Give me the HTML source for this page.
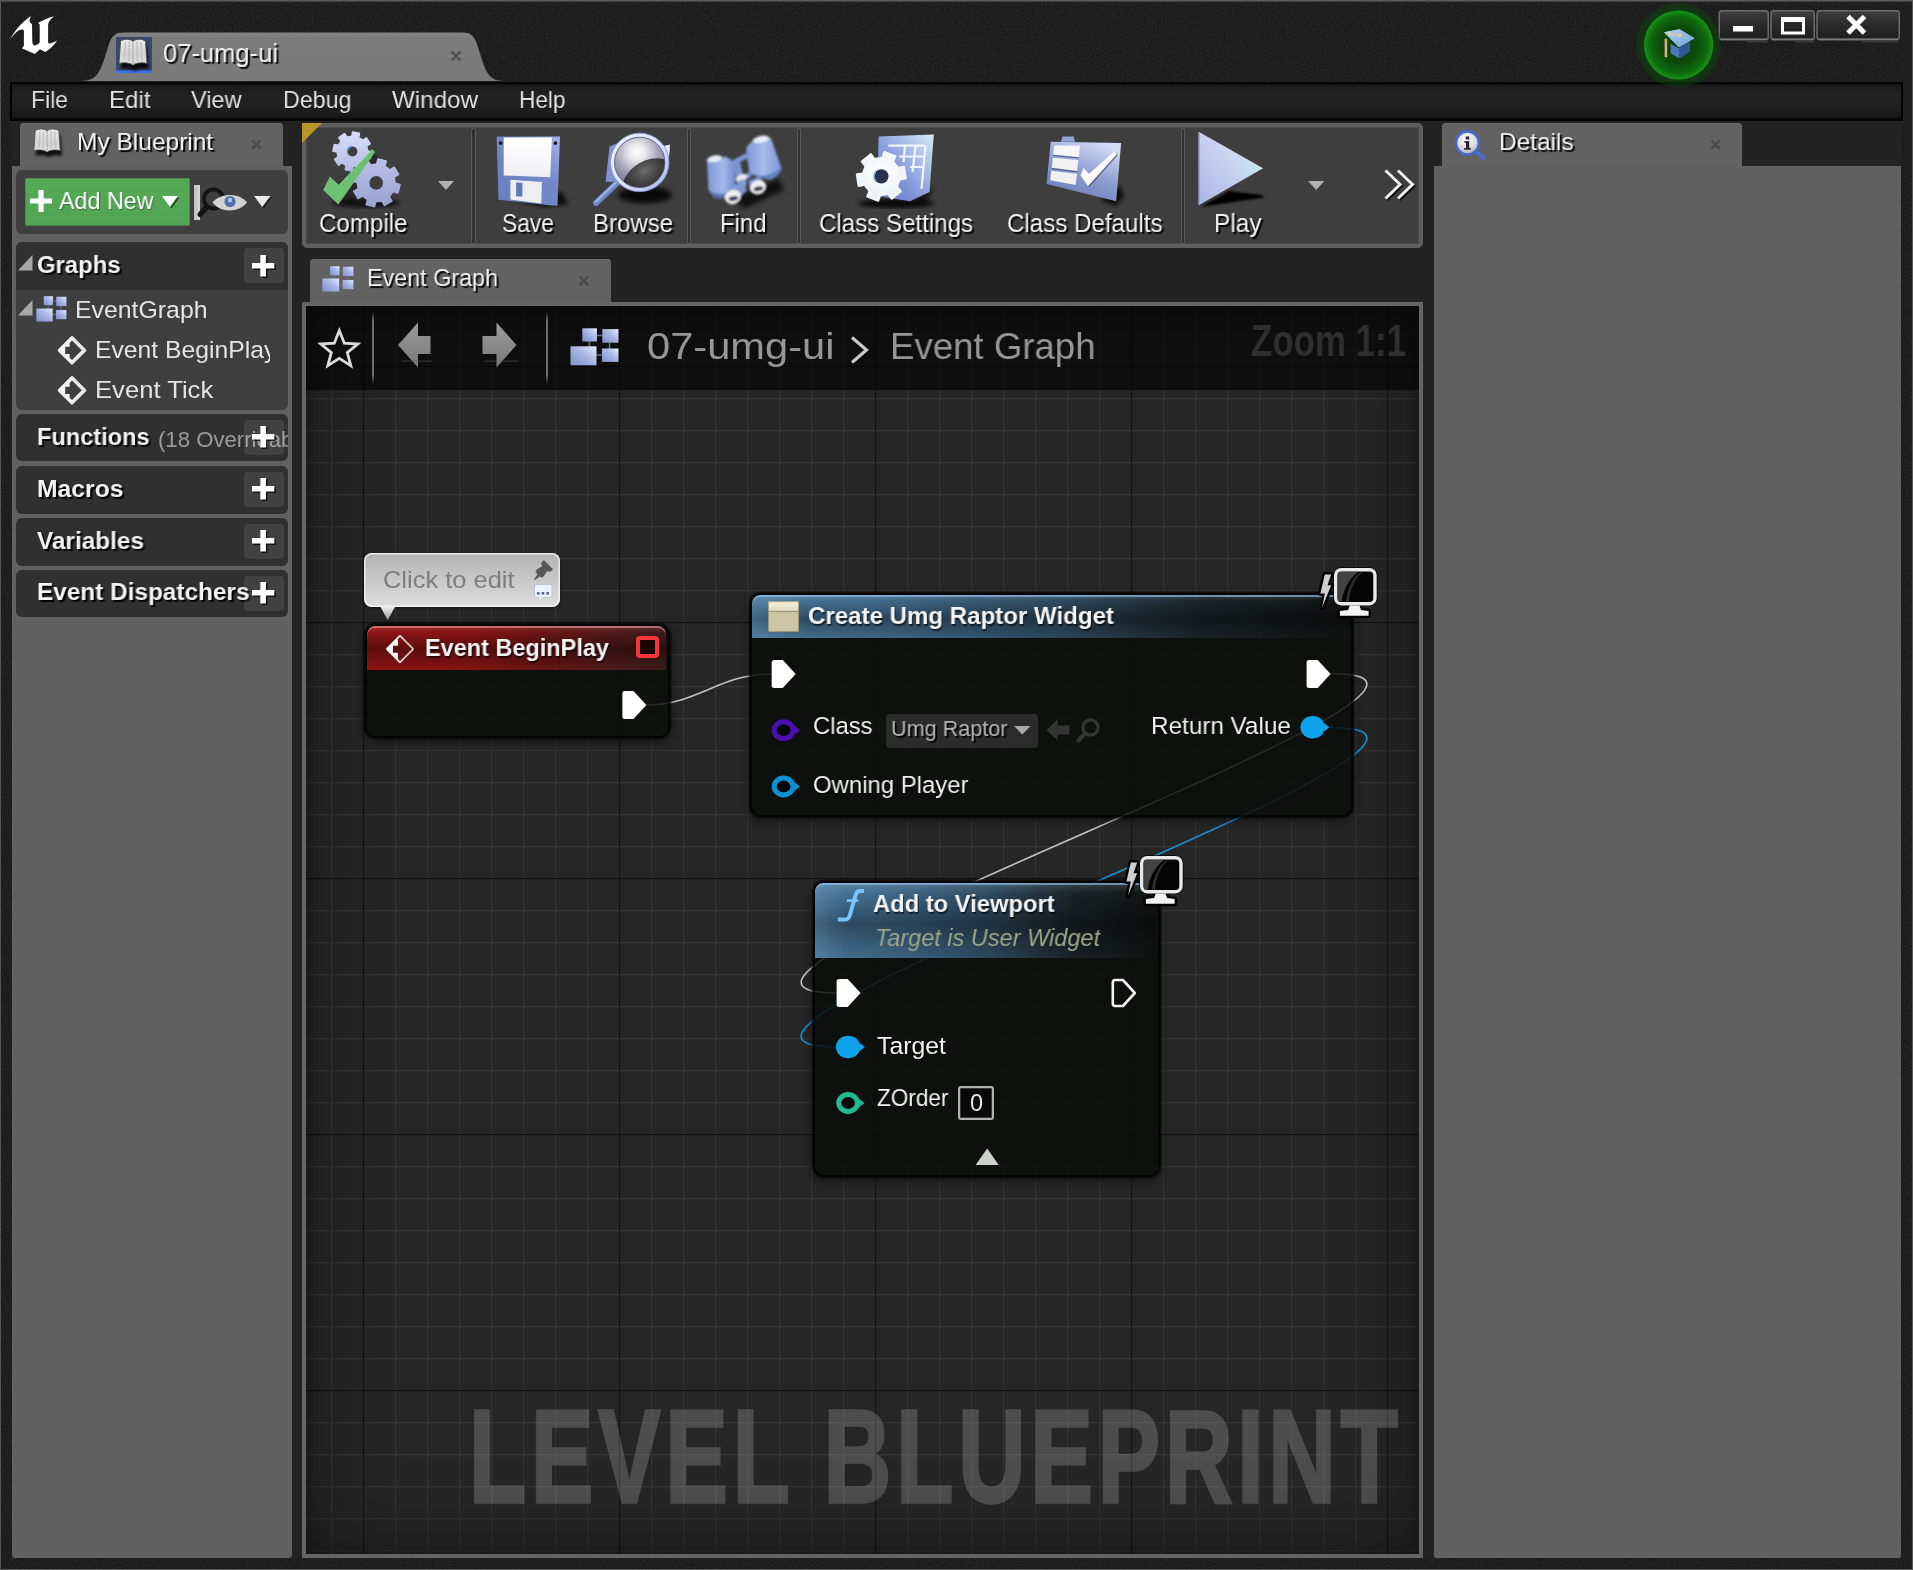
<!DOCTYPE html>
<html><head><meta charset="utf-8"><title>07-umg-ui</title>
<style>
html,body{margin:0;padding:0;}
body{width:1913px;height:1570px;position:relative;overflow:hidden;background:#222222;font-family:"Liberation Sans",sans-serif;}
.t{position:absolute;white-space:nowrap;transform-origin:0 50%;display:block;will-change:transform;}
div,svg,span{box-sizing:border-box;}
</style></head><body>

<svg style="position:absolute;left:0;top:0" width="1913" height="1570">
<defs>
<filter id="nz" x="0" y="0" width="100%" height="100%"><feTurbulence type="fractalNoise" baseFrequency="0.9" numOctaves="2" seed="3" result="n"/><feColorMatrix type="matrix" values="0 0 0 0 1  0 0 0 0 1  0 0 0 0 1  0.09 0.09 0.09 0 -0.095"/></filter>
<radialGradient id="tg" cx="50%" cy="0%" r="70%"><stop offset="0" stop-color="#2a2a2a"/><stop offset="1" stop-color="#1a1a1a"/></radialGradient>
</defs>
<rect width="1913" height="1570" fill="#151515"/>
<rect width="1913" height="1570" filter="url(#nz)"/>
<rect x="11" y="121" width="1891" height="1438" fill="#222222"/>
<rect x="0.5" y="0.5" width="1912" height="1569" fill="none" stroke="#565656" stroke-width="1"/>
<rect x="0" y="0" width="1913" height="1.6" fill="#5a5a5a"/>
</svg>
<svg style="position:absolute;left:5px;top:10px;overflow:visible" width="60" height="50" viewBox="5 10 60 50"><defs><filter id="lb"><feGaussianBlur stdDeviation="0.35"/></filter></defs><path d="M10.2 39.1 C15.5 29.6 22.5 21.6 30.9 16 C30 18 29.3 20.5 29.6 21.6 C30 23 32 23.5 32 24.7 L32.3 41.5 C32.3 44 33.5 45.4 34.8 45.4 C36.5 45.4 38.5 44 39.7 42.6 L39.7 25.1 C39.7 24 38.8 23.3 37.9 23 C43 20.5 48 17.8 54 16.3 C51 19 48.1 22 48.1 24.7 L48.1 41.5 C48.1 43 48.6 43.6 49.1 43.6 C51.5 43.3 54.5 42 57.2 40.5 C54 45.5 49.5 49.5 45.3 52 L40 49.2 L34.8 54.1 L21.8 48.2 C23 47.5 23.9 46.5 23.9 45 L23.9 31 C23.9 30 23 29.6 22 29.6 C18 29.6 14 34.5 10.2 39.1 Z" fill="#fff" filter="url(#lb)"/></svg>
<svg style="position:absolute;left:70px;top:28px" width="450" height="54" viewBox="70 28 450 54">
<defs><linearGradient id="mt" x1="0" y1="0" x2="0" y2="1"><stop offset="0" stop-color="#858585"/><stop offset=".12" stop-color="#7c7c7c"/><stop offset="1" stop-color="#7a7a7a"/></linearGradient></defs>
<path d="M80 81 C98 81 100 70 104 60 L109 44 C112 35 116 32.4 124 32.4 L462 32.4 C470 32.4 474 35 477 44 L482 60 C486 70 488 81 504 81 Z" fill="url(#mt)"/>
</svg>
<svg style="position:absolute;left:116px;top:37px;overflow:visible" width="36" height="36" viewBox="0 0 36 36" preserveAspectRatio="none"><defs><filter id="bks1" x="-30%" y="-30%" width="160%" height="180%"><feGaussianBlur stdDeviation="1.6"/></filter><filter id="bkb1"><feGaussianBlur stdDeviation="0.5"/></filter><linearGradient id="bkg1" x1="0" y1="0" x2="0" y2="1"><stop offset="0" stop-color="#ececec"/><stop offset=".6" stop-color="#d2d2d2"/><stop offset="1" stop-color="#e2e2e2"/></linearGradient></defs><rect x="0" y="0" width="36" height="36" fill="#3a496b"/><rect x="0" y="33.3" width="36" height="2.7" fill="#3a72f2"/><path d="M4.5 4 C8 1.8 12.5 1.8 15.5 3.2 L17 4.4 L18.5 3.2 C21.5 1.8 26 1.8 29.5 4 L31 26.5 C27 25.3 21 25.5 17 28 C13 25.5 7 25.3 3 26.5 Z" fill="#000" opacity=".85" transform="translate(1.8,6)" filter="url(#bks1)"/><g filter="url(#bkb1)"><path d="M4.5 4 C8 1.8 12.5 1.8 15.5 3.2 L17 4.4 L18.5 3.2 C21.5 1.8 26 1.8 29.5 4 L31 26.5 C27 25.3 21 25.5 17 28 C13 25.5 7 25.3 3 26.5 Z" fill="url(#bkg1)" stroke="#4c4c4c" stroke-width="0.9"/><path d="M17 4.4 L17 28" stroke="#b4b4b4" stroke-width="1.3"/><path d="M9.5 5 L8.3 23.5 M13.3 4.6 L12.8 24.3 M21 4.6 L21.4 24.3 M25 5 L26 23.5" stroke="#c4c4c4" stroke-width="1.6"/></g></svg>
<span class="t" style="left:163.0px;top:40.2px;font-size:26.5px;line-height:26.5px;color:#f0f0f0;text-shadow:2px 2px 1px rgba(0,0,0,.95);transform:scaleX(0.9639);">07-umg-ui</span>
<svg style="position:absolute;left:450px;top:49.5px" width="12" height="12" viewBox="0 0 10 10"><path d="M1.2 1.2 L8.8 8.8 M8.8 1.2 L1.2 8.8" stroke="#555" stroke-width="2.1" fill="none"/></svg>
<svg style="position:absolute;left:1715px;top:8px;overflow:visible" width="190" height="38" viewBox="1715 8 190 38"><defs><linearGradient id="wb" x1="0" y1="0" x2="0" y2="1"><stop offset="0" stop-color="#3d3d3d"/><stop offset=".5" stop-color="#2a2a2a"/><stop offset="1" stop-color="#1d1d1d"/></linearGradient></defs><rect x="1719.25" y="10.75" width="49.0" height="29" rx="3" fill="url(#wb)" stroke="#6c6c6c" stroke-width="1.5"/><path d="M1720.5 39 L1767 39" stroke="#8a8a8a" stroke-width="1"/><rect x="1746.275" y="40.5" width="21.715" height="2" fill="#3a3a3a"/><rect x="1771.05" y="10.75" width="43.200000000000045" height="29" rx="3" fill="url(#wb)" stroke="#6c6c6c" stroke-width="1.5"/><path d="M1772.3 39 L1813 39" stroke="#8a8a8a" stroke-width="1"/><rect x="1794.885" y="40.5" width="19.221000000000018" height="2" fill="#3a3a3a"/><rect x="1817.05" y="10.75" width="82.20000000000005" height="29" rx="3" fill="url(#wb)" stroke="#6c6c6c" stroke-width="1.5"/><path d="M1818.3 39 L1898 39" stroke="#8a8a8a" stroke-width="1"/><rect x="1862.335" y="40.5" width="35.99100000000002" height="2" fill="#3a3a3a"/><rect x="1733" y="26" width="20" height="5.5" fill="#fff"/><rect x="1782.5" y="18.5" width="21" height="14.5" fill="none" stroke="#fff" stroke-width="3"/><rect x="1781" y="17" width="24" height="5" fill="#fff"/><path d="M1848 16.5 L1864.5 33 M1864.5 16.5 L1848 33" stroke="#fff" stroke-width="5"/></svg>
<div style="position:absolute;left:10px;top:81.5px;width:1893px;height:39px;background:linear-gradient(#060606 0,#060606 1.5px,#1a1a1a 3.5px,#232323 34%,#1e1e1e 70%,#181818 35px,#070707 37px,#050505 100%);border-left:2px solid #000;border-right:2px solid #000;"></div>
<span class="t" style="left:31.0px;top:87.9px;font-size:24.5px;line-height:24.5px;color:#e2e2e2;text-shadow:0 1px 1px rgba(0,0,0,.6);transform:scaleX(0.9372);">File</span>
<span class="t" style="left:108.5px;top:87.9px;font-size:24.5px;line-height:24.5px;color:#e2e2e2;text-shadow:0 1px 1px rgba(0,0,0,.6);transform:scaleX(0.9830);">Edit</span>
<span class="t" style="left:190.5px;top:87.9px;font-size:24.5px;line-height:24.5px;color:#e2e2e2;text-shadow:0 1px 1px rgba(0,0,0,.6);transform:scaleX(0.9590);">View</span>
<span class="t" style="left:282.5px;top:87.9px;font-size:24.5px;line-height:24.5px;color:#e2e2e2;text-shadow:0 1px 1px rgba(0,0,0,.6);transform:scaleX(0.9488);">Debug</span>
<span class="t" style="left:392.0px;top:87.9px;font-size:24.5px;line-height:24.5px;color:#e2e2e2;text-shadow:0 1px 1px rgba(0,0,0,.6);transform:scaleX(0.9869);">Window</span>
<span class="t" style="left:518.5px;top:87.9px;font-size:24.5px;line-height:24.5px;color:#e2e2e2;text-shadow:0 1px 1px rgba(0,0,0,.6);transform:scaleX(0.9228);">Help</span>
<svg style="position:absolute;left:1630px;top:0px;overflow:visible" width="100" height="92" viewBox="1630 0 100 92"><defs><radialGradient id="tgo"><stop offset="0" stop-color="#0b560b" stop-opacity=".9"/><stop offset=".8" stop-color="#0a480a" stop-opacity=".6"/><stop offset=".96" stop-color="#0a440a" stop-opacity=".48"/><stop offset="1" stop-color="#0a440a" stop-opacity="0"/></radialGradient>
<radialGradient id="tgi" cx="50%" cy="50%" r="50%"><stop offset="0" stop-color="#0a3c0a"/><stop offset=".55" stop-color="#0c4c0c"/><stop offset=".84" stop-color="#0f6c0f"/><stop offset="1" stop-color="#159615"/></radialGradient>
<linearGradient id="cap" x1="0" y1="0" x2="1" y2="1"><stop offset="0" stop-color="#b8d8f8"/><stop offset="1" stop-color="#6f9cd4"/></linearGradient></defs><circle cx="1678.6" cy="45" r="43" fill="url(#tgo)"/>
<circle cx="1678.6" cy="45" r="34.6" fill="url(#tgi)"/>
<g transform="translate(0,-9.3)">
<path d="M1664 41.5 L1679.5 38.5 L1694.5 47.5 L1679 56.5 Z" fill="#8fb6e4"/>
<path d="M1664 41.5 L1679.5 38.5 L1694.5 47.5 L1679 56.5 Z" fill="url(#cap)"/>
<path d="M1670.5 53 L1679 57.5 L1689.5 51.5 L1689.5 61 L1679 67.5 L1670.5 62.5 Z" fill="#4a78b4"/>
<path d="M1679 57.5 L1689.5 51.5 L1689.5 61 L1679 67.5 Z" fill="#2f5a94"/>
<path d="M1666 43 L1680 44.5" stroke="#e8c87a" stroke-width="1.3"/>
<rect x="1664.6" y="48" width="2.6" height="18.5" fill="#d8b070"/>
<circle cx="1680" cy="44.5" r="1.6" fill="#f0d080"/>
</g></svg>
<div style="position:absolute;left:20px;top:122.5px;width:262.5px;height:46px;background:#626262;border-radius:4px 4px 0 0;box-shadow:inset 0 1px 0 #6c6c6c;"></div>
<div style="position:absolute;left:12px;top:166px;width:280px;height:1392px;background:#616161;border-radius:0 0 3px 3px;"></div>
<svg style="position:absolute;left:31px;top:127px;overflow:visible" width="34" height="32" viewBox="0 0 36 36" preserveAspectRatio="none"><defs><filter id="bks2" x="-30%" y="-30%" width="160%" height="180%"><feGaussianBlur stdDeviation="1.6"/></filter><filter id="bkb2"><feGaussianBlur stdDeviation="0.5"/></filter><linearGradient id="bkg2" x1="0" y1="0" x2="0" y2="1"><stop offset="0" stop-color="#ececec"/><stop offset=".6" stop-color="#d2d2d2"/><stop offset="1" stop-color="#e2e2e2"/></linearGradient></defs><path d="M4.5 4 C8 1.8 12.5 1.8 15.5 3.2 L17 4.4 L18.5 3.2 C21.5 1.8 26 1.8 29.5 4 L31 26.5 C27 25.3 21 25.5 17 28 C13 25.5 7 25.3 3 26.5 Z" fill="#000" opacity=".85" transform="translate(1.8,6)" filter="url(#bks2)"/><g filter="url(#bkb2)"><path d="M4.5 4 C8 1.8 12.5 1.8 15.5 3.2 L17 4.4 L18.5 3.2 C21.5 1.8 26 1.8 29.5 4 L31 26.5 C27 25.3 21 25.5 17 28 C13 25.5 7 25.3 3 26.5 Z" fill="url(#bkg2)" stroke="#4c4c4c" stroke-width="0.9"/><path d="M17 4.4 L17 28" stroke="#b4b4b4" stroke-width="1.3"/><path d="M9.5 5 L8.3 23.5 M13.3 4.6 L12.8 24.3 M21 4.6 L21.4 24.3 M25 5 L26 23.5" stroke="#c4c4c4" stroke-width="1.6"/></g></svg>
<span class="t" style="left:76.5px;top:130.3px;font-size:24.5px;line-height:24.5px;color:#f0f0f0;text-shadow:2px 2px 1px rgba(0,0,0,.95);">My Blueprint</span>
<svg style="position:absolute;left:250.5px;top:139px" width="11" height="11" viewBox="0 0 10 10"><path d="M1.2 1.2 L8.8 8.8 M8.8 1.2 L1.2 8.8" stroke="#4a4a4a" stroke-width="2.1" fill="none"/></svg>
<div style="position:absolute;left:16px;top:169.5px;width:272px;height:64.5px;background:#3f3f3f;border-radius:6px;"></div>
<div style="position:absolute;left:24.5px;top:178px;width:165.5px;height:47.5px;background:linear-gradient(#55aa55,#52a452);border-radius:2px;box-shadow:inset 0 0 0 1px rgba(40,90,40,.35);"></div>
<svg style="position:absolute;left:30px;top:190px;overflow:visible" width="22" height="22"><path d="M8.4 0 h5.2 v8.4 h8.4 v5.2 h-8.4 v8.4 h-5.2 v-8.4 h-8.4 v-5.2 h8.4 Z" fill="#fff"/></svg>
<span class="t" style="left:59.0px;top:189.3px;font-size:24.5px;line-height:24.5px;color:#fff;text-shadow:1px 1px 1px rgba(0,0,0,.35);transform:scaleX(0.9506);">Add New</span>
<svg style="position:absolute;left:162px;top:196px;overflow:visible" width="16" height="11"><path d="M1.5 1.5 L17.5 1.5 L9.5 12.5 Z" fill="#000" opacity=".55"/><path d="M0 0 L16 0 L8.0 11 Z" fill="#fff"/></svg>
<div style="position:absolute;left:194px;top:184.5px;width:6px;height:35.5px;background:linear-gradient(90deg,#bdbdbd,#d8d8d8);"></div>
<svg style="position:absolute;left:196px;top:184px;overflow:visible" width="56" height="36" viewBox="196 184 56 36"><circle cx="213.5" cy="199" r="9.6" fill="none" stroke="#141414" stroke-width="4"/>
<path d="M207 206.5 L200 214.5" stroke="#141414" stroke-width="5" stroke-linecap="round"/>
<path d="M212.5 202.5 C220 193 239 192 247 202.5 C239 213 220 213 212.5 202.5 Z" fill="#d2d2d2"/>
<circle cx="230" cy="201.5" r="5.6" fill="#4f6cae"/>
<circle cx="230" cy="200" r="2.2" fill="#b8c8ee"/></svg>
<svg style="position:absolute;left:253.5px;top:196px;overflow:visible" width="16.5" height="11"><path d="M1.5 1.5 L18.0 1.5 L9.75 12.5 Z" fill="#000" opacity=".55"/><path d="M0 0 L16.5 0 L8.25 11 Z" fill="#e8e8e8"/></svg>
<div style="position:absolute;left:16px;top:242px;width:272px;height:168px;background:#3f3f3f;border-radius:6px;"></div>
<div style="position:absolute;left:16px;top:242px;width:272px;height:48px;background:#303030;border-radius:6px 6px 0 0;"></div>
<svg style="position:absolute;left:17.5px;top:255px;overflow:visible" width="14.5" height="15.5"><path d="M14.5 0 L14.5 15.5 L0 15.5 Z" fill="#a8a8a8"/></svg>
<span class="t" style="left:36.5px;top:252.8px;font-size:24.5px;line-height:24.5px;color:#f2f2f2;font-weight:bold;text-shadow:2px 2px 1px rgba(0,0,0,.95);transform:scaleX(0.9735);">Graphs</span>
<div style="position:absolute;left:244px;top:248.4px;width:40px;height:35px;background:rgba(255,255,255,.085);border-radius:4px;"></div>
<svg style="position:absolute;left:252px;top:254.70000000000002px;overflow:visible" width="22.3" height="21.5"><path d="M9.850000000000001 1.5 h5.6 v7.95 h8.350000000000001 v5.6 h-8.350000000000001 v7.95 h-5.6 v-7.95 h-8.350000000000001 v-5.6 h8.350000000000001 Z" fill="#000" opacity=".7"/><path d="M8.350000000000001 0 h5.6 v7.95 h8.350000000000001 v5.6 h-8.350000000000001 v7.95 h-5.6 v-7.95 h-8.350000000000001 v-5.6 h8.350000000000001 Z" fill="#fff"/></svg>
<svg style="position:absolute;left:17.5px;top:299.5px;overflow:visible" width="14.5" height="15.5"><path d="M14.5 0 L14.5 15.5 L0 15.5 Z" fill="#a8a8a8"/></svg>
<svg style="position:absolute;left:36px;top:296px;overflow:visible" width="32" height="26" viewBox="0 0 51 38" preserveAspectRatio="none"><defs><linearGradient id="gi1" x1="0" y1="1" x2="1" y2="0"><stop offset="0" stop-color="#7f8fcb"/><stop offset=".55" stop-color="#a9b6e6"/><stop offset="1" stop-color="#e4eeff"/></linearGradient><filter id="gib1"><feGaussianBlur stdDeviation="0.55"/></filter></defs>
<g filter="url(#gib1)">
<path d="M19.4 13 V19 M26.5 7.4 H32.5 M39.5 14.5 V21 M26.5 27 H32" stroke="#66728f" stroke-width="1.5" fill="none"/>
<rect x="12.3" y="0.3" width="14.6" height="13.2" fill="url(#gi1)"/>
<rect x="32.3" y="1.1" width="16.2" height="13.6" fill="url(#gi1)"/>
<rect x="0.5" y="18.3" width="26" height="19" fill="url(#gi1)"/>
<rect x="31.9" y="20.5" width="16.6" height="13.4" fill="url(#gi1)"/>
</g></svg>
<span class="t" style="left:75.0px;top:297.6px;font-size:24.5px;line-height:24.5px;color:#e4e4e4;transform:scaleX(1.0134);">EventGraph</span>
<svg style="position:absolute;left:57px;top:335.2px;overflow:visible" width="30" height="30.6" viewBox="0 0 30 30.6"><defs><linearGradient id="dmg1" x1="0" y1="0" x2="1" y2="0"><stop offset="0" stop-color="#f2f2f2"/><stop offset=".45" stop-color="#f2f2f2"/><stop offset=".6" stop-color="#f2f2f2" stop-opacity=".95"/><stop offset="1" stop-color="#f2f2f2" stop-opacity=".95"/></linearGradient><filter id="dmb1"><feGaussianBlur stdDeviation="0.4"/></filter></defs>
<path filter="url(#dmb1)" d="M1.2 14.2 L13.9 1.5 Q15 0.4 16.1 1.5 L28.8 14.2 Q29.9 15.3 28.8 16.4 L16.1 29.1 Q15 30.2 13.9 29.1 L1.2 16.4 Q0.1 15.3 1.2 14.2 Z M8.2 11.7 L12.6 11.7 L12.6 7.9 L15 5.5 L24.8 15.3 L15 25.1 L12.6 22.7 L12.6 19 L8.2 19 Z" fill="url(#dmg1)" fill-rule="evenodd"/></svg>
<div style="position:absolute;left:90px;top:330px;width:180px;height:40px;overflow:hidden;"><span class="t" style="left:5.3px;top:7.8px;font-size:24.5px;line-height:24.5px;color:#e4e4e4;transform:scaleX(1.0085);">Event BeginPlay</span></div>
<svg style="position:absolute;left:57px;top:375.2px;overflow:visible" width="30" height="30.6" viewBox="0 0 30 30.6"><defs><linearGradient id="dmg2" x1="0" y1="0" x2="1" y2="0"><stop offset="0" stop-color="#f2f2f2"/><stop offset=".45" stop-color="#f2f2f2"/><stop offset=".6" stop-color="#f2f2f2" stop-opacity=".95"/><stop offset="1" stop-color="#f2f2f2" stop-opacity=".95"/></linearGradient><filter id="dmb2"><feGaussianBlur stdDeviation="0.4"/></filter></defs>
<path filter="url(#dmb2)" d="M1.2 14.2 L13.9 1.5 Q15 0.4 16.1 1.5 L28.8 14.2 Q29.9 15.3 28.8 16.4 L16.1 29.1 Q15 30.2 13.9 29.1 L1.2 16.4 Q0.1 15.3 1.2 14.2 Z M8.2 11.7 L12.6 11.7 L12.6 7.9 L15 5.5 L24.8 15.3 L15 25.1 L12.6 22.7 L12.6 19 L8.2 19 Z" fill="url(#dmg2)" fill-rule="evenodd"/></svg>
<span class="t" style="left:95.3px;top:377.6px;font-size:24.5px;line-height:24.5px;color:#e4e4e4;transform:scaleX(1.0459);">Event Tick</span>
<div style="position:absolute;left:16px;top:414.2px;width:272px;height:47.3px;background:#303030;border-radius:6px;"></div>
<div style="position:absolute;left:16px;top:414.2px;width:272px;height:47.3px;overflow:hidden;"><span class="t" style="left:20.5px;top:10.4px;font-size:24.5px;line-height:24.5px;color:#f2f2f2;font-weight:bold;text-shadow:2px 2px 1px rgba(0,0,0,.95);transform:scaleX(0.9612);">Functions</span><span class="t" style="left:142.0px;top:14.5px;font-size:22px;line-height:22px;color:#9a9a9a;transform:scaleX(1.0066);">(18 Overridable)</span></div>
<div style="position:absolute;left:244px;top:419.8px;width:40px;height:35px;background:rgba(255,255,255,.085);border-radius:4px;"></div>
<svg style="position:absolute;left:252px;top:426.1px;overflow:visible" width="22.3" height="21.5"><path d="M9.850000000000001 1.5 h5.6 v7.95 h8.350000000000001 v5.6 h-8.350000000000001 v7.95 h-5.6 v-7.95 h-8.350000000000001 v-5.6 h8.350000000000001 Z" fill="#000" opacity=".7"/><path d="M8.350000000000001 0 h5.6 v7.95 h8.350000000000001 v5.6 h-8.350000000000001 v7.95 h-5.6 v-7.95 h-8.350000000000001 v-5.6 h8.350000000000001 Z" fill="#fff"/></svg>
<div style="position:absolute;left:16px;top:466.4px;width:272px;height:47.3px;background:#303030;border-radius:6px;"></div>
<span class="t" style="left:36.5px;top:476.8px;font-size:24.5px;line-height:24.5px;color:#f2f2f2;font-weight:bold;text-shadow:2px 2px 1px rgba(0,0,0,.95);transform:scaleX(1.0083);">Macros</span>
<div style="position:absolute;left:244px;top:472px;width:40px;height:35px;background:rgba(255,255,255,.085);border-radius:4px;"></div>
<svg style="position:absolute;left:252px;top:478.3px;overflow:visible" width="22.3" height="21.5"><path d="M9.850000000000001 1.5 h5.6 v7.95 h8.350000000000001 v5.6 h-8.350000000000001 v7.95 h-5.6 v-7.95 h-8.350000000000001 v-5.6 h8.350000000000001 Z" fill="#000" opacity=".7"/><path d="M8.350000000000001 0 h5.6 v7.95 h8.350000000000001 v5.6 h-8.350000000000001 v7.95 h-5.6 v-7.95 h-8.350000000000001 v-5.6 h8.350000000000001 Z" fill="#fff"/></svg>
<div style="position:absolute;left:16px;top:518.3px;width:272px;height:47.3px;background:#303030;border-radius:6px;"></div>
<span class="t" style="left:36.5px;top:528.6px;font-size:24.5px;line-height:24.5px;color:#f2f2f2;font-weight:bold;text-shadow:2px 2px 1px rgba(0,0,0,.95);transform:scaleX(0.9944);">Variables</span>
<div style="position:absolute;left:244px;top:523.8px;width:40px;height:35px;background:rgba(255,255,255,.085);border-radius:4px;"></div>
<svg style="position:absolute;left:252px;top:530.0999999999999px;overflow:visible" width="22.3" height="21.5"><path d="M9.850000000000001 1.5 h5.6 v7.95 h8.350000000000001 v5.6 h-8.350000000000001 v7.95 h-5.6 v-7.95 h-8.350000000000001 v-5.6 h8.350000000000001 Z" fill="#000" opacity=".7"/><path d="M8.350000000000001 0 h5.6 v7.95 h8.350000000000001 v5.6 h-8.350000000000001 v7.95 h-5.6 v-7.95 h-8.350000000000001 v-5.6 h8.350000000000001 Z" fill="#fff"/></svg>
<div style="position:absolute;left:16px;top:570.3px;width:272px;height:47.2px;background:#303030;border-radius:6px;"></div>
<span class="t" style="left:36.5px;top:580.3px;font-size:24.5px;line-height:24.5px;color:#f2f2f2;font-weight:bold;text-shadow:2px 2px 1px rgba(0,0,0,.95);transform:scaleX(0.9940);">Event Dispatchers</span>
<div style="position:absolute;left:244px;top:575.8px;width:40px;height:35px;background:rgba(255,255,255,.085);border-radius:4px;"></div>
<svg style="position:absolute;left:252px;top:582.0999999999999px;overflow:visible" width="22.3" height="21.5"><path d="M9.850000000000001 1.5 h5.6 v7.95 h8.350000000000001 v5.6 h-8.350000000000001 v7.95 h-5.6 v-7.95 h-8.350000000000001 v-5.6 h8.350000000000001 Z" fill="#000" opacity=".7"/><path d="M8.350000000000001 0 h5.6 v7.95 h8.350000000000001 v5.6 h-8.350000000000001 v7.95 h-5.6 v-7.95 h-8.350000000000001 v-5.6 h8.350000000000001 Z" fill="#fff"/></svg>
<div style="position:absolute;left:302px;top:122.5px;width:1121px;height:125.5px;background:#3e3e3e;border:4px solid #5f5f5f;border-radius:5px;box-shadow:inset 0 0 0 1px #4a4a4a;"></div>
<svg style="position:absolute;left:302px;top:122.5px" width="22" height="22"><path d="M0 0 L20 0 L0 20 Z" fill="#b8952a"/></svg>
<div style="position:absolute;left:471px;top:127.5px;width:4.6px;height:116px;background:#323232;border:1.3px solid #5b5b5b;border-radius:2.3px;"></div>
<div style="position:absolute;left:686.7px;top:127.5px;width:4.6px;height:116px;background:#323232;border:1.3px solid #5b5b5b;border-radius:2.3px;"></div>
<div style="position:absolute;left:796.6px;top:127.5px;width:4.6px;height:116px;background:#323232;border:1.3px solid #5b5b5b;border-radius:2.3px;"></div>
<div style="position:absolute;left:1180.5px;top:127.5px;width:4.6px;height:116px;background:#323232;border:1.3px solid #5b5b5b;border-radius:2.3px;"></div>
<svg style="position:absolute;left:318px;top:128px;overflow:visible" width="90" height="82" viewBox="318 128 90 82"><defs><linearGradient id="cg1" x1="0" y1="0" x2="0" y2="1"><stop offset="0" stop-color="#d8defa"/><stop offset="1" stop-color="#b3bbe2"/></linearGradient>
<linearGradient id="cg2" x1="0" y1="0" x2="0" y2="1"><stop offset="0" stop-color="#b9c1ea"/><stop offset="1" stop-color="#99a3d0"/></linearGradient>
<filter id="cb"><feGaussianBlur stdDeviation="2"/></filter><filter id="cs"><feGaussianBlur stdDeviation="0.7"/></filter></defs><ellipse cx="366" cy="203" rx="34" ry="4.5" fill="#000" opacity=".7" filter="url(#cb)"/>
<g filter="url(#cs)">
<path d="M367.59 151.08 L371.70 151.81 L370.41 158.44 L366.33 157.59 L363.44 161.94 L365.83 165.36 L360.23 169.14 L357.95 165.65 L352.82 166.69 L352.09 170.80 L345.46 169.51 L346.31 165.43 L341.96 162.54 L338.54 164.93 L334.76 159.33 L338.25 157.05 L337.21 151.92 L333.10 151.19 L334.39 144.56 L338.47 145.41 L341.36 141.06 L338.97 137.64 L344.57 133.86 L346.85 137.35 L351.98 136.31 L352.71 132.20 L359.34 133.49 L358.49 137.57 L362.84 140.46 L366.26 138.07 L370.04 143.67 L366.55 145.95 Z M358.40 151.50 A6.0 6.0 0 1 0 346.40 151.50 A6.0 6.0 0 1 0 358.40 151.50 Z" fill="url(#cg1)" fill-rule="evenodd" stroke="url(#cg1)" stroke-width="1.8" stroke-linejoin="round"/>
<path d="M347.3 150.5 A5.3 5.3 0 0 1 351.5 146.3" stroke="#6aa6e8" stroke-width="1.4" fill="none"/>
<path d="M374 153.5 L340 203.5 L352 203.5 L381 160 Z" fill="#000" opacity=".35"/>
<path d="M394.99 183.49 L399.93 184.69 L397.86 192.76 L392.95 191.44 L389.07 196.60 L391.71 200.95 L384.54 205.19 L382.01 200.78 L375.61 201.69 L374.41 206.63 L366.34 204.56 L367.66 199.65 L362.50 195.77 L358.15 198.41 L353.91 191.24 L358.32 188.71 L357.41 182.31 L352.47 181.11 L354.54 173.04 L359.45 174.36 L363.33 169.20 L360.69 164.85 L367.86 160.61 L370.39 165.02 L376.79 164.11 L377.99 159.17 L386.06 161.24 L384.74 166.15 L389.90 170.03 L394.25 167.39 L398.49 174.56 L394.08 177.09 Z M383.90 182.90 A7.7 7.7 0 1 0 368.50 182.90 A7.7 7.7 0 1 0 383.90 182.90 Z" fill="url(#cg2)" fill-rule="evenodd" stroke="url(#cg2)" stroke-width="1.8" stroke-linejoin="round"/>
<path d="M329.6 177 L323.1 190 L338.3 204.6 L375.1 152.1 L372.4 149.4 L338.8 185.6 Z" fill="#6dbf72"/>
<path d="M329.6 177 L338.8 185.6 L372.4 149.4" fill="none" stroke="#86d68a" stroke-width="1"/>
</g></svg>
<span class="t" style="left:318.5px;top:210.8px;font-size:25px;line-height:25px;color:#f0f0f0;text-shadow:2px 2px 1px rgba(0,0,0,.95);transform:scaleX(0.9651);">Compile</span>
<svg style="position:absolute;left:438px;top:180.6px;overflow:visible" width="16" height="9"><path d="M0 0 L16 0 L8.0 9 Z" fill="#b0b0b0"/></svg>
<svg style="position:absolute;left:490px;top:130px;overflow:visible" width="85" height="82" viewBox="490 130 85 82"><defs><linearGradient id="sv1" x1="0" y1="1" x2="1" y2="0"><stop offset="0" stop-color="#6880c0"/><stop offset=".6" stop-color="#7289c8"/><stop offset="1" stop-color="#a3b2ee"/></linearGradient>
<linearGradient id="sv2" x1="0" y1="0" x2="0" y2="1"><stop offset="0" stop-color="#ffffff"/><stop offset="1" stop-color="#f0f0f4"/></linearGradient>
<filter id="svb"><feGaussianBlur stdDeviation="2.2"/></filter><filter id="svs"><feGaussianBlur stdDeviation="0.65"/></filter></defs><path d="M512 200 L562 192 L568 204 L545 207 Z" fill="#000" opacity=".8" filter="url(#svb)"/>
<g filter="url(#svs)">
<path d="M496.6 136.6 L560 136.6 L557.5 205.7 L548.9 205.2 L498.5 199.7 Z" fill="url(#sv1)"/>
<path d="M503.7 137.5 L551.9 137.5 L550.2 177.2 L503.7 175.4 Z" fill="url(#sv2)"/>
<path d="M510.4 179.7 L541.9 181.9 L541.3 203.5 L510.4 199.5 Z" fill="#eeeeee"/>
<path d="M516.1 182.4 L522.4 182.8 L522.4 196.8 L516.1 196.2 Z" fill="#5d79c0"/>
<circle cx="500.7" cy="143.1" r="1.9" fill="#1c1c22"/><circle cx="555.4" cy="143.1" r="1.9" fill="#1c1c22"/>
</g></svg>
<span class="t" style="left:502.0px;top:210.8px;font-size:25px;line-height:25px;color:#f0f0f0;text-shadow:2px 2px 1px rgba(0,0,0,.95);transform:scaleX(0.9126);">Save</span>
<svg style="position:absolute;left:588px;top:128px;overflow:visible" width="92" height="84" viewBox="588 128 92 84"><defs><radialGradient id="br1" cx="45%" cy="30%" r="65%"><stop offset="0" stop-color="#ffffff"/><stop offset=".22" stop-color="#ececf0"/><stop offset=".6" stop-color="#a9abbb"/><stop offset="1" stop-color="#74768c"/></radialGradient>
<radialGradient id="br2" cx="50%" cy="20%" r="80%"><stop offset="0" stop-color="#6a6a6a"/><stop offset=".5" stop-color="#2a2a2a"/><stop offset="1" stop-color="#0c0c0c"/></radialGradient>
<linearGradient id="br3" x1="0" y1="0" x2="1" y2="1"><stop offset="0" stop-color="#eef2ff"/><stop offset=".5" stop-color="#dfe6ff"/><stop offset="1" stop-color="#a8b6f0"/></linearGradient>
<clipPath id="brc"><circle cx="639.7" cy="162.4" r="25.5"/></clipPath>
<filter id="brb"><feGaussianBlur stdDeviation="2.5"/></filter><filter id="brs"><feGaussianBlur stdDeviation="0.65"/></filter></defs><ellipse cx="645" cy="195" rx="27" ry="8.5" fill="#000" opacity=".85" filter="url(#brb)"/>
<g filter="url(#brs)">
<path d="M609.5 146.5 L620 142 L668.5 146 L670 150 L660 182 L605.6 181.8 Z" fill="#8093d0"/>
<path d="M664 146 L670 144.5 L669 158 Z" fill="#e6ecff"/>
<path d="M617 183 L596 203" stroke="#6f86c8" stroke-width="6" stroke-linecap="round"/>
<path d="M616 182.5 L596 201.5" stroke="#9fb2ea" stroke-width="2" stroke-linecap="round"/>
<circle cx="639.7" cy="162.4" r="25.5" fill="url(#br1)"/>
<g clip-path="url(#brc)"><ellipse cx="651" cy="183" rx="30" ry="23" fill="url(#br2)" transform="rotate(-28 651 183)"/></g>
<circle cx="639.7" cy="162.4" r="27.2" fill="none" stroke="url(#br3)" stroke-width="3.8"/>
<circle cx="639.7" cy="162.4" r="29.3" fill="none" stroke="#8a9ad6" stroke-width="0.9"/>
<circle cx="639.7" cy="162.4" r="25.2" fill="none" stroke="#5a6788" stroke-width="0.9"/>
</g></svg>
<span class="t" style="left:593.0px;top:210.8px;font-size:25px;line-height:25px;color:#f0f0f0;text-shadow:2px 2px 1px rgba(0,0,0,.95);transform:scaleX(0.9597);">Browse</span>
<svg style="position:absolute;left:700px;top:128px;overflow:visible" width="90" height="84" viewBox="700 128 90 84"><defs><linearGradient id="fi1" x1="0" y1="0" x2="1" y2="0"><stop offset="0" stop-color="#7f98d8"/><stop offset=".55" stop-color="#a4b6e8"/><stop offset="1" stop-color="#6f88cc"/></linearGradient>
<linearGradient id="fi2" x1="0" y1="0" x2="1" y2="0"><stop offset="0" stop-color="#7f98d8"/><stop offset=".5" stop-color="#a8baea"/><stop offset="1" stop-color="#7a94d6"/></linearGradient>
<filter id="fib"><feGaussianBlur stdDeviation="2.5"/></filter><filter id="fis"><feGaussianBlur stdDeviation="0.8"/></filter></defs><path d="M730 200 L778 178 L784 190 L745 208 Z" fill="#000" opacity=".75" filter="url(#fib)"/>
<g filter="url(#fis)">
<ellipse cx="714.5" cy="159.5" rx="8" ry="4" fill="#e8ecf6" transform="rotate(-12 714.5 159.5)"/>
<path d="M707 160.5 C712 164 721 162 724.5 156 L736.5 163 L734.5 190 C730 197 722 200 714 197.5 L708.5 190 Z" fill="url(#fi1)"/>
<path d="M708.5 188 C714 197 728 195 734.5 187 L734 191 C730 198 720 200 714 197.5 Z" fill="#5a70ae"/>
<ellipse cx="761" cy="139.8" rx="8.5" ry="4" fill="#e8ecf6" transform="rotate(-12 761 139.8)"/>
<path d="M752 141 C757 145 767 143 770.5 137 L781.5 168 C779 175 774 179 769 179.5 L749.5 174 L746 148 Z" fill="url(#fi2)"/>
<path d="M749.5 172 C758 178 772 176 781 167 L781.3 170 C778 176 773 179 769 179.5 L749.5 174.5 Z" fill="#6880c4"/>
<path d="M733 160 L746.5 153 L748 158 L740 162 L743 175 L750 172 L751 177 L738 184 Z" fill="#7d96d6"/>
<ellipse cx="741.5" cy="178" rx="6" ry="3.5" fill="#e8e8ec" transform="rotate(-25 741.5 178)"/>
<circle cx="742.5" cy="183.5" r="4.2" fill="#8aa2de"/>
<path d="M727 189 L741 181 L747 190 L738 199 Z" fill="#7d96d6"/>
<path d="M748 181 L760 176 L764 184 L752 190 Z" fill="#7d96d6"/>
<ellipse cx="733" cy="197" rx="8.3" ry="7" fill="#f2f2f2" transform="rotate(-18 733 197)"/>
<ellipse cx="733.5" cy="198.5" rx="5" ry="2.3" fill="#2a3550" transform="rotate(-12 733.5 198.5)"/>
<ellipse cx="758" cy="187.3" rx="8.3" ry="7" fill="#f2f2f2" transform="rotate(-18 758 187.3)"/>
<ellipse cx="758.5" cy="188.8" rx="5" ry="2.3" fill="#2a3550" transform="rotate(-12 758.5 188.8)"/>
</g></svg>
<span class="t" style="left:720.0px;top:210.8px;font-size:25px;line-height:25px;color:#f0f0f0;text-shadow:2px 2px 1px rgba(0,0,0,.95);transform:scaleX(0.9561);">Find</span>
<svg style="position:absolute;left:850px;top:128px;overflow:visible" width="92" height="84" viewBox="850 128 92 84"><defs><linearGradient id="se1" x1="0" y1="1" x2="1" y2="0"><stop offset="0" stop-color="#5a72c0"/><stop offset=".45" stop-color="#8a9cdc"/><stop offset="1" stop-color="#d6eaf6"/></linearGradient>
<radialGradient id="se2" cx="50%" cy="40%" r="70%"><stop offset="0" stop-color="#ffffff"/><stop offset="1" stop-color="#e4eef6"/></radialGradient>
<filter id="seb"><feGaussianBlur stdDeviation="2.2"/></filter><filter id="ses"><feGaussianBlur stdDeviation="0.7"/></filter></defs><ellipse cx="896" cy="203.5" rx="38" ry="4.5" fill="#000" opacity=".85" filter="url(#seb)"/>
<path d="M912 200 L932 189 L936 184 L925 204 Z" fill="#000" opacity=".7" filter="url(#seb)"/>
<g filter="url(#ses)">
<path d="M878.6 136.6 L933.8 134.5 L929.5 192.1 L910 201.3 L877 196 Z" fill="url(#se1)"/>
<path d="M888.3 145.6 H925.5 M899 156.5 H924.5 M910 167 H923.5 M925.5 145.6 L921.5 189 M915.5 146 L912.5 172 M905 146 L903.5 162" stroke="#f0f4ff" stroke-width="2.2" fill="none"/>
<path d="M897.96 168.13 L903.83 167.03 L905.62 178.34 L899.70 179.12 L896.79 186.69 L900.68 191.23 L891.78 198.44 L888.15 193.69 L880.13 194.96 L878.15 200.60 L867.45 196.49 L869.75 190.98 L864.64 184.67 L858.77 185.77 L856.98 174.46 L862.90 173.68 L865.81 166.11 L861.92 161.57 L870.82 154.36 L874.45 159.11 L882.47 157.84 L884.45 152.20 L895.15 156.31 L892.85 161.82 Z M888.50 176.40 A7.2 7.2 0 1 0 874.10 176.40 A7.2 7.2 0 1 0 888.50 176.40 Z" fill="url(#se2)" fill-rule="evenodd" stroke="#f4f8fc" stroke-width="2.4" stroke-linejoin="round"/>
<circle cx="881.3" cy="176.4" r="7.2" fill="#2a3350"/>
<path d="M875.5 172 A7.2 7.2 0 0 0 876 181.5" stroke="#7ab0d8" stroke-width="1.5" fill="none"/>
</g></svg>
<span class="t" style="left:819.0px;top:210.8px;font-size:25px;line-height:25px;color:#f0f0f0;text-shadow:2px 2px 1px rgba(0,0,0,.95);transform:scaleX(0.9638);">Class Settings</span>
<svg style="position:absolute;left:1040px;top:130px;overflow:visible" width="90" height="82" viewBox="1040 130 90 82"><defs><linearGradient id="de1" x1="0.2" y1="1" x2="0.7" y2="0"><stop offset="0" stop-color="#667ab4"/><stop offset=".5" stop-color="#8c9cd0"/><stop offset="1" stop-color="#d2dcf8"/></linearGradient>
<filter id="deb"><feGaussianBlur stdDeviation="2.2"/></filter><filter id="des"><feGaussianBlur stdDeviation="0.65"/></filter></defs><path d="M1100 200 L1120 186 L1124 196 L1116 206 Z" fill="#000" opacity=".8" filter="url(#deb)"/>
<g filter="url(#des)">
<path d="M1061 141.8 L1062.5 136.6 L1073.5 136.6 L1075 141.8 Z" fill="#93a4dc"/>
<path d="M1050.7 141.8 L1121.1 142.9 L1116.2 201.3 L1046.6 184 Z" fill="url(#de1)"/>
<path d="M1054.5 145.6 L1079.9 145.6 L1078.9 156.9 L1052.9 154.5 Z" fill="#f6f6f6"/>
<path d="M1052.9 157.8 L1078.3 160 L1077.2 171 L1051.8 167.8 Z" fill="#f2f2f2"/>
<path d="M1051.2 170.8 L1077.2 173.8 L1075.6 185.1 L1050.2 180.2 Z" fill="#f0f0f0"/>
<path d="M1052.9 155.5 L1078.8 158 M1051.8 168.6 L1077.2 171.8" stroke="#303a58" stroke-width="1" opacity=".7"/>
<path d="M1084.7 168.8 L1081.5 176.4 L1089.1 187.2 L1117.8 155.2 L1115.6 152 L1090.1 174.7 Z" fill="#20284a" opacity=".55"/>
<path d="M1083.7 167.8 L1080.5 175.4 L1088.1 186.2 L1116.8 154.2 L1114.6 151 L1089.1 173.7 Z" fill="#fafafa"/>
</g></svg>
<span class="t" style="left:1007.0px;top:210.8px;font-size:25px;line-height:25px;color:#f0f0f0;text-shadow:2px 2px 1px rgba(0,0,0,.95);transform:scaleX(0.9648);">Class Defaults</span>
<svg style="position:absolute;left:1192px;top:126px;overflow:visible" width="80" height="86" viewBox="1192 126 80 86"><defs><linearGradient id="pl1" x1="0" y1="0" x2="1" y2="0"><stop offset="0" stop-color="#b4c0ea"/><stop offset=".5" stop-color="#c6d2f0"/><stop offset="1" stop-color="#c8f0f0"/></linearGradient>
<linearGradient id="pl2" x1="0" y1="0" x2="0" y2="1"><stop offset="0" stop-color="#fff" stop-opacity=".25"/><stop offset="1" stop-color="#8a9ad8" stop-opacity=".25"/></linearGradient>
<filter id="plb"><feGaussianBlur stdDeviation="1.1"/></filter><filter id="pls"><feGaussianBlur stdDeviation="0.65"/></filter></defs><path d="M1200.5 207 L1264.5 197.5 L1262 195 L1229 191 Z" fill="#050505" filter="url(#plb)"/>
<g filter="url(#pls)">
<path d="M1198.6 131.7 L1263 168.2 L1198.6 205.3 Z" fill="url(#pl1)"/>
<path d="M1198.6 131.7 L1263 168.2 L1198.6 205.3 Z" fill="url(#pl2)"/>
<path d="M1199.2 132.5 L1199.2 204.5" stroke="#8e9cc8" stroke-width="1.2"/>
</g></svg>
<span class="t" style="left:1214.0px;top:210.8px;font-size:25px;line-height:25px;color:#f0f0f0;text-shadow:2px 2px 1px rgba(0,0,0,.95);transform:scaleX(0.9767);">Play</span>
<svg style="position:absolute;left:1307.6px;top:180.6px;overflow:visible" width="16.4" height="9"><path d="M0 0 L16.4 0 L8.2 9 Z" fill="#b0b0b0"/></svg>
<svg style="position:absolute;left:1380px;top:165px;overflow:visible" width="40" height="40" viewBox="1380 165 40 40"><path d="M1385.5 170.5 L1400 184.5 L1385.5 198.5 M1398 170.5 L1412.5 184.5 L1398 198.5" fill="none" stroke="#000" stroke-width="3" transform="translate(1.2,1.5)" opacity=".8"/>
<path d="M1385.5 170.5 L1400 184.5 L1385.5 198.5 M1398 170.5 L1412.5 184.5 L1398 198.5" fill="none" stroke="#f4f4f4" stroke-width="3"/></svg>
<div style="position:absolute;left:310px;top:258.5px;width:300.5px;height:46px;background:#626262;border-radius:4px 4px 0 0;box-shadow:inset 0 1px 0 #6c6c6c;"></div>
<svg style="position:absolute;left:321.5px;top:266px;overflow:visible" width="33" height="26" viewBox="0 0 51 38" preserveAspectRatio="none"><defs><linearGradient id="gi2" x1="0" y1="1" x2="1" y2="0"><stop offset="0" stop-color="#7f8fcb"/><stop offset=".55" stop-color="#a9b6e6"/><stop offset="1" stop-color="#e4eeff"/></linearGradient><filter id="gib2"><feGaussianBlur stdDeviation="0.55"/></filter></defs>
<g filter="url(#gib2)">
<path d="M19.4 13 V19 M26.5 7.4 H32.5 M39.5 14.5 V21 M26.5 27 H32" stroke="#66728f" stroke-width="1.5" fill="none"/>
<rect x="12.3" y="0.3" width="14.6" height="13.2" fill="url(#gi2)"/>
<rect x="32.3" y="1.1" width="16.2" height="13.6" fill="url(#gi2)"/>
<rect x="0.5" y="18.3" width="26" height="19" fill="url(#gi2)"/>
<rect x="31.9" y="20.5" width="16.6" height="13.4" fill="url(#gi2)"/>
</g></svg>
<span class="t" style="left:367.0px;top:266.3px;font-size:24.5px;line-height:24.5px;color:#f0f0f0;text-shadow:2px 2px 1px rgba(0,0,0,.95);transform:scaleX(0.9524);">Event Graph</span>
<svg style="position:absolute;left:577.5px;top:275px" width="11.5" height="11.5" viewBox="0 0 10 10"><path d="M1.2 1.2 L8.8 8.8 M8.8 1.2 L1.2 8.8" stroke="#4a4a4a" stroke-width="2.1" fill="none"/></svg>
<div style="position:absolute;left:302px;top:302px;width:1121px;height:1256px;background:#656565;border-radius:1px;"></div>
<div style="position:absolute;left:306px;top:306px;width:1113px;height:1248px;overflow:hidden;background:#262626;">
<div style="position:absolute;left:-306px;top:-306px;width:1913px;height:1570px;">
<svg style="position:absolute;left:306px;top:306px" width="1113" height="1248" viewBox="306 306 1113 1248">
<defs>
<pattern id="gmin" width="32" height="32" patternUnits="userSpaceOnUse" patternTransform="translate(363 366)"><path d="M0.5 0 V32 M0 0.5 H32" stroke="#343434" stroke-width="1.35" fill="none"/></pattern>
<pattern id="gmaj" width="256" height="256" patternUnits="userSpaceOnUse" patternTransform="translate(363 366)"><path d="M0.6 0 V256 M0 0.6 H256" stroke="#111111" stroke-width="1.15" fill="none"/></pattern>
</defs>
<rect x="306" y="306" width="1113" height="1248" fill="url(#gmin)"/>
<rect x="306" y="306" width="1113" height="1248" fill="url(#gmaj)"/>
</svg>
<div style="position:absolute;left:306px;top:306px;width:1113px;height:1248px;box-shadow:inset 0 0 75px 10px rgba(0,0,0,.34), inset 0 0 12px 1px rgba(0,0,0,.25);"></div>
<span class="t" style="left:469.3px;top:1390.8px;font-size:131.7px;line-height:131.7px;color:#fff;font-weight:bold;letter-spacing:7px;transform:scaleX(0.7088);-webkit-text-stroke:3.4px #fff;opacity:.182;">LEVEL BLUEPRINT</span>
<svg style="position:absolute;left:306px;top:306px" width="1113" height="1248" viewBox="306 306 1113 1248">
<path d="M646 705 C698 705 719 674 771 674" fill="none" stroke="#c6c6c6" stroke-width="1.55"/>
<path d="M1330 673.5 C1563 673.5 605 993 838 993" fill="none" stroke="#c6c6c6" stroke-width="1.55"/>
<path d="M1330 727.5 C1563 727.5 605 1047 838 1047" fill="none" stroke="#1691d6" stroke-width="1.65"/>
</svg>
<div style="position:absolute;left:364px;top:553px;width:196px;height:54px;background:linear-gradient(#b3b3b3,#c6c6c6 45%,#dedede);border-radius:8px;box-shadow:inset 0 0 0 1.5px rgba(255,255,255,.7),0 1px 3px rgba(0,0,0,.5);"></div>
<svg style="position:absolute;left:378px;top:606px" width="20" height="14"><defs><linearGradient id="cbp" x1="0" y1="0" x2="0" y2="1"><stop offset="0" stop-color="#f2f2f2"/><stop offset="1" stop-color="#9a9a9a"/></linearGradient></defs><path d="M2 0 L17.5 0 L9.7 14 Z" fill="url(#cbp)"/></svg>
<span class="t" style="left:382.5px;top:567.9px;font-size:24.5px;line-height:24.5px;color:#7e7e7e;transform:scaleX(1.0385);">Click to edit</span>
<svg style="position:absolute;left:532px;top:559px" width="24" height="44" viewBox="532 559 24 44">
<g fill="#585858" stroke="#585858" stroke-width="1.2" stroke-linejoin="round"><path d="M544 561 L552.3 569.3 L549.8 571.2 L546.8 570.4 L543.8 575.3 L541.6 577.2 L536 571.6 L537.8 569.5 L542.8 566.6 L541.8 563 Z"/><path d="M538.8 573.6 L534.5 579.6 L540.4 575.2 Z"/></g>
<rect x="534.5" y="584.5" width="17.5" height="13" rx="1.5" fill="#eef2fa" stroke="#b8c4dc" stroke-width="1"/><path d="M539 597 L539 600.5 L543 597 Z" fill="#dfe6f4"/>
<rect x="537" y="592" width="2.6" height="2.6" fill="#56688c"/><rect x="541.7" y="592" width="2.6" height="2.6" fill="#56688c"/><rect x="546.4" y="592" width="2.6" height="2.6" fill="#56688c"/>
</svg>
<div style="position:absolute;left:365.3px;top:624.3px;width:304.7px;height:113.7px;border-radius:11px;border:2.8px solid rgba(0,0,0,.88);background:rgba(9,12,8,.83);background-clip:padding-box;box-shadow:0 0 0 1.5px rgba(0,0,0,.5),0 3px 9px 1px rgba(0,0,0,.5);"><div style="position:absolute;left:0px;top:0px;width:299.09999999999997px;height:43.7px;background:linear-gradient(180deg,rgba(255,170,170,.16) 0%,rgba(0,0,0,0) 14%,rgba(0,0,0,.36) 52%,rgba(0,0,0,.02) 100%),linear-gradient(90deg,rgba(150,22,22,.97) 0%,rgba(142,20,20,.95) 35%,rgba(104,26,26,.88) 72%,rgba(74,32,32,.8) 100%);border-radius:8.2px 8.2px 0 0;box-shadow:inset 0 2px 0 rgba(235,150,150,.62);"></div></div>
<svg style="position:absolute;left:385px;top:633.5px;overflow:visible" width="30" height="30" viewBox="0 0 30 30.6"><defs><linearGradient id="dmg3" x1="0" y1="0" x2="1" y2="0"><stop offset="0" stop-color="#f4f4f4"/><stop offset=".45" stop-color="#f4f4f4"/><stop offset=".6" stop-color="#f4f4f4" stop-opacity=".78"/><stop offset="1" stop-color="#f4f4f4" stop-opacity=".78"/></linearGradient><filter id="dmb3"><feGaussianBlur stdDeviation="0.4"/></filter></defs>
<path filter="url(#dmb3)" d="M1.2 14.2 L13.9 1.5 Q15 0.4 16.1 1.5 L28.8 14.2 Q29.9 15.3 28.8 16.4 L16.1 29.1 Q15 30.2 13.9 29.1 L1.2 16.4 Q0.1 15.3 1.2 14.2 Z M7.8 11.9 L12.9 11.9 L12.9 5.2 L15 3.1 L27.2 15.3 L15 27.5 L12.9 25.4 L12.9 19.2 L7.8 19.2 Z" fill="url(#dmg3)" fill-rule="evenodd"/></svg>
<span class="t" style="left:424.6px;top:636.3px;font-size:24.5px;line-height:24.5px;color:#f4f4f4;font-weight:bold;text-shadow:1px 2px 1px rgba(0,0,0,.6);transform:scaleX(0.9584);">Event BeginPlay</span>
<div style="position:absolute;left:636px;top:635.8px;width:22.5px;height:22.3px;border:4px solid #f5353a;border-radius:4px;background:#1c0303;"></div>
<svg style="position:absolute;left:615px;top:685px" width="40" height="40" viewBox="615 685 40 40"><path d="M624.9 691 L633.4399999999999 691 L646.4 705.0 L633.4399999999999 719 L624.9 719 Q622.4 719 622.4 716.5 L622.4 693.5 Q622.4 691 624.9 691 Z" fill="#fff"/></svg>
<div style="position:absolute;left:749.7px;top:592.8px;width:603.8px;height:224.2px;border-radius:11px;border:2.8px solid rgba(0,0,0,.88);background:rgba(9,12,8,.83);background-clip:padding-box;box-shadow:0 0 0 1.5px rgba(0,0,0,.5),0 3px 9px 1px rgba(0,0,0,.5);"><div style="position:absolute;left:0px;top:0px;width:598.1999999999999px;height:43.1px;background:linear-gradient(90deg,rgba(130,180,220,.22),rgba(0,0,0,0) 9%),linear-gradient(180deg,rgba(200,230,255,.16) 0%,rgba(0,0,0,0) 14%,rgba(0,0,0,.34) 55%,rgba(0,0,0,.04) 100%),linear-gradient(90deg,rgba(74,122,158,.97) 0%,rgba(68,112,146,.94) 22%,rgba(54,86,112,.86) 50%,rgba(34,46,56,.62) 76%,rgba(24,26,26,.38) 100%);border-radius:8.2px 8.2px 0 0;box-shadow:inset 0 2px 0 rgba(150,200,240,.62);"></div></div>
<svg style="position:absolute;left:766px;top:599px" width="36" height="36" viewBox="766 599 36 36">
<rect x="768" y="601" width="31" height="31" rx="2.5" fill="#cdc5a6"/><rect x="768" y="601" width="31" height="9" rx="2.5" fill="#efe9d2"/><rect x="768" y="607" width="31" height="3.5" fill="#e6dfc4"/><rect x="768.5" y="601.5" width="30" height="30" rx="2.5" fill="none" stroke="#8a8468" stroke-width="1" opacity=".7"/><path d="M768 611.5 H799" stroke="#9a9274" stroke-width="1"/></svg>
<span class="t" style="left:808.0px;top:604.2px;font-size:24.5px;line-height:24.5px;color:#f4f4f4;font-weight:bold;text-shadow:1px 2px 1px rgba(0,0,0,.6);transform:scaleX(0.9823);">Create Umg Raptor Widget</span>
<svg style="position:absolute;left:760px;top:650px" width="590" height="160" viewBox="760 650 590 160"><path d="M774.2 660 L782.74 660 L795.7 674.0 L782.74 688 L774.2 688 Q771.7 688 771.7 685.5 L771.7 662.5 Q771.7 660 774.2 660 Z" fill="#fff"/><path d="M1309.1 660 L1317.6399999999999 660 L1330.6 674.0 L1317.6399999999999 688 L1309.1 688 Q1306.6 688 1306.6 685.5 L1306.6 662.5 Q1306.6 660 1309.1 660 Z" fill="#fff"/><ellipse cx="783.6" cy="730.2" rx="9.4" ry="8.4" fill="#050505" stroke="#4b0eb0" stroke-width="5"/><path d="M794.8 726.0 L800 730.2 L794.8 734.4000000000001 Z" fill="#4b0eb0"/><ellipse cx="783.6" cy="786.5" rx="9.4" ry="8.4" fill="#050505" stroke="#0e90d4" stroke-width="5"/><path d="M794.8 782.3 L800 786.5 L794.8 790.7 Z" fill="#0e90d4"/><ellipse cx="1312.6" cy="727.3" rx="12.200000000000001" ry="11.3" fill="#0da2ea"/><path d="M1324.1 723.0999999999999 L1329.3 727.3 L1324.1 731.5 Z" fill="#0da2ea"/></svg>
<span class="t" style="left:812.5px;top:714.3px;font-size:24.5px;line-height:24.5px;color:#f2f2f2;text-shadow:1px 1px 1px rgba(0,0,0,.7);transform:scaleX(0.9712);">Class</span>
<div style="position:absolute;left:886px;top:713.5px;width:151.5px;height:34.5px;background:#2b2b2b;border-radius:4px;"></div>
<span class="t" style="left:891.0px;top:717.5px;font-size:22.5px;line-height:22.5px;color:#b4b4b4;text-shadow:2px 2px 0 rgba(0,0,0,.9);transform:scaleX(0.9605);">Umg Raptor</span>
<svg style="position:absolute;left:1013.5px;top:726px;overflow:visible" width="16.5" height="8.5"><path d="M0 0 L16.5 0 L8.25 8.5 Z" fill="#a8a8a8"/></svg>
<svg style="position:absolute;left:1044px;top:716px" width="60" height="28" viewBox="1044 716 60 28">
<path d="M1046.4 730 L1057.5 719.5 L1057.5 725.5 L1069.5 725.5 L1069.5 734.5 L1057.5 734.5 L1057.5 740.5 Z" fill="#343434"/>
<circle cx="1090.5" cy="727.5" r="7.6" fill="none" stroke="#343434" stroke-width="3.4"/><path d="M1085 733.5 L1078.5 740.5" stroke="#343434" stroke-width="4.2" stroke-linecap="round"/>
</svg>
<span class="t" style="left:1150.6px;top:714.3px;font-size:24.5px;line-height:24.5px;color:#f2f2f2;text-shadow:1px 1px 1px rgba(0,0,0,.7);transform:scaleX(0.9909);">Return Value</span>
<span class="t" style="left:812.5px;top:773.3px;font-size:24.5px;line-height:24.5px;color:#f2f2f2;text-shadow:1px 1px 1px rgba(0,0,0,.7);transform:scaleX(0.9760);">Owning Player</span>
<svg style="position:absolute;left:1317.9px;top:564.1px;overflow:visible" width="64" height="56" viewBox="1317.9 564.1 64 56"><g transform="translate(0.0,0.0)">
<g fill="#000" stroke="#000" stroke-width="5" stroke-linejoin="round" opacity=".9">
<rect x="1335.6" y="569.8" width="39.3" height="34" rx="6"/>
<path d="M1349.6 605.5 L1359.4 605.5 L1361 610.5 L1368.5 611 L1368.5 615.8 L1339.8 615.8 L1339.8 611 L1348 610.5 Z"/>
<path d="M1324.7 574.6 L1331.1 574.6 L1327.4 585.4 L1331.1 585.4 L1322 607.6 L1324.7 593.6 L1320.3 593.6 Z"/>
</g>
<rect x="1335.6" y="569.8" width="39.3" height="34" rx="5.5" fill="#050505" stroke="#e9e9e9" stroke-width="3.4"/>
<path d="M1338 572 L1358 572 C1349 578 1343 590 1341.5 601.5 L1338 601.5 Z" fill="#4a4a4a" opacity=".9"/>
<path d="M1360 572.5 C1351 580 1346.5 592 1346 601.5 L1349 601.5 C1349.5 592 1353 580 1362 572.5 Z" fill="#3a3a3a" opacity=".8"/>
<path d="M1349.6 605.5 L1359.4 605.5 L1361 610 L1368.5 611.2 L1368.5 615.8 L1339.8 615.8 L1339.8 611.2 L1348 610 Z" fill="#f2f2f2"/>
<path d="M1324.7 574.6 L1331.1 574.6 L1327.4 585.4 L1331.1 585.4 L1322 607.6 L1324.7 593.6 L1320.3 593.6 Z" fill="#cfcfcf"/>
</g></svg>
<div style="position:absolute;left:813px;top:880.7px;width:347px;height:296.4px;border-radius:11px;border:2.8px solid rgba(0,0,0,.88);background:rgba(9,12,8,.83);background-clip:padding-box;box-shadow:0 0 0 1.5px rgba(0,0,0,.5),0 3px 9px 1px rgba(0,0,0,.5);"><div style="position:absolute;left:0px;top:0px;width:341.4px;height:75.3px;background:linear-gradient(90deg,rgba(130,180,220,.22),rgba(0,0,0,0) 9%),linear-gradient(180deg,rgba(200,230,255,.16) 0%,rgba(0,0,0,0) 14%,rgba(0,0,0,.34) 55%,rgba(0,0,0,.04) 100%),linear-gradient(90deg,rgba(74,122,158,.97) 0%,rgba(68,112,146,.94) 22%,rgba(54,86,112,.86) 50%,rgba(34,46,56,.62) 76%,rgba(24,26,26,.38) 100%);border-radius:8.2px 8.2px 0 0;box-shadow:inset 0 2px 0 rgba(150,200,240,.62);"></div></div>
<svg style="position:absolute;left:834px;top:885px" width="34" height="40" viewBox="834 885 34 40">
<path d="M864 891 L859.8 891 C856.9 891 856.2 892.6 855.5 895.4 L850 914.8 C849.1 918 848.2 919.5 845.4 919.5 L837.8 919.5" fill="none" stroke="#7ac4fc" stroke-width="3.9"/>
<path d="M846.8 900.6 L858.4 900.6" stroke="#7ac4fc" stroke-width="2.6"/></svg>
<span class="t" style="left:873.0px;top:892.3px;font-size:24.5px;line-height:24.5px;color:#f4f4f4;font-weight:bold;text-shadow:1px 2px 1px rgba(0,0,0,.6);transform:scaleX(0.9692);">Add to Viewport</span>
<span class="t" style="left:874.5px;top:926.0px;font-size:24.5px;line-height:24.5px;color:#a0a58a;font-style:italic;transform:scaleX(0.9597);">Target is User Widget</span>
<svg style="position:absolute;left:825px;top:970px" width="330" height="200" viewBox="825 970 330 200"><path d="M839.1 979 L847.64 979 L860.6 993.0 L847.64 1007 L839.1 1007 Q836.6 1007 836.6 1004.5 L836.6 981.5 Q836.6 979 839.1 979 Z" fill="#fff"/><path d="M1115.3 980 L1122.9199999999998 980 L1134.8 993.0 L1122.9199999999998 1006 L1115.3 1006 Q1112.8 1006 1112.8 1003.5 L1112.8 982.5 Q1112.8 980 1115.3 980 Z" fill="none" stroke="#f2f2f2" stroke-width="2.6" stroke-linejoin="round"/><ellipse cx="848.1" cy="1047" rx="12.200000000000001" ry="11.3" fill="#0da2ea"/><path d="M859.5999999999999 1042.8 L864.8 1047 L859.5999999999999 1051.2 Z" fill="#0da2ea"/><ellipse cx="848.1" cy="1103" rx="9.4" ry="8.4" fill="#050505" stroke="#20ba90" stroke-width="5"/><path d="M859.3 1098.8 L864.5 1103 L859.3 1107.2 Z" fill="#20ba90"/><path d="M975.6 1165 L987.2 1148.6 L998.7 1165 Z" fill="#cfcfcf"/></svg>
<span class="t" style="left:876.6px;top:1033.7px;font-size:24.5px;line-height:24.5px;color:#f2f2f2;text-shadow:1px 1px 1px rgba(0,0,0,.7);transform:scaleX(1.0118);">Target</span>
<span class="t" style="left:876.6px;top:1085.5px;font-size:24.5px;line-height:24.5px;color:#f2f2f2;text-shadow:1px 1px 1px rgba(0,0,0,.7);transform:scaleX(0.9202);">ZOrder</span>
<div style="position:absolute;left:958.4px;top:1085.7px;width:35.6px;height:34.7px;border:2px solid #b0b0b0;border-radius:3px;background:#080808;box-shadow:inset 0 0 0 1px #3a3a3a;"></div>
<span class="t" style="left:969.5px;top:1091.6px;font-size:23.5px;line-height:23.5px;color:#e8e8e8;">0</span>
<svg style="position:absolute;left:1123.5px;top:851.5px;overflow:visible" width="64" height="56" viewBox="1123.5 851.5 64 56"><g transform="translate(-194.4000000000001,287.4)">
<g fill="#000" stroke="#000" stroke-width="5" stroke-linejoin="round" opacity=".9">
<rect x="1335.6" y="569.8" width="39.3" height="34" rx="6"/>
<path d="M1349.6 605.5 L1359.4 605.5 L1361 610.5 L1368.5 611 L1368.5 615.8 L1339.8 615.8 L1339.8 611 L1348 610.5 Z"/>
<path d="M1324.7 574.6 L1331.1 574.6 L1327.4 585.4 L1331.1 585.4 L1322 607.6 L1324.7 593.6 L1320.3 593.6 Z"/>
</g>
<rect x="1335.6" y="569.8" width="39.3" height="34" rx="5.5" fill="#050505" stroke="#e9e9e9" stroke-width="3.4"/>
<path d="M1338 572 L1358 572 C1349 578 1343 590 1341.5 601.5 L1338 601.5 Z" fill="#4a4a4a" opacity=".9"/>
<path d="M1360 572.5 C1351 580 1346.5 592 1346 601.5 L1349 601.5 C1349.5 592 1353 580 1362 572.5 Z" fill="#3a3a3a" opacity=".8"/>
<path d="M1349.6 605.5 L1359.4 605.5 L1361 610 L1368.5 611.2 L1368.5 615.8 L1339.8 615.8 L1339.8 611.2 L1348 610 Z" fill="#f2f2f2"/>
<path d="M1324.7 574.6 L1331.1 574.6 L1327.4 585.4 L1331.1 585.4 L1322 607.6 L1324.7 593.6 L1320.3 593.6 Z" fill="#cfcfcf"/>
</g></svg>
<div style="position:absolute;left:306px;top:306px;width:1113px;height:84px;background:rgba(0,0,0,.60);"></div>
<svg style="position:absolute;left:316px;top:324px" width="48" height="46" viewBox="316 324 48 46">
<path d="M339.3 330.5 L344.3 343.2 L357.8 344 L347.3 352.6 L350.8 365.6 L339.3 358.3 L327.8 365.6 L331.3 352.6 L320.8 344 L334.3 343.2 Z" fill="none" stroke="#dadada" stroke-width="2.8" stroke-linejoin="miter"/></svg>
<div style="position:absolute;left:371.5px;top:312px;width:2px;height:72px;background:linear-gradient(rgba(120,120,120,.0),#6e6e6e 12%,#6e6e6e 88%,rgba(120,120,120,0));"></div>
<div style="position:absolute;left:546px;top:312px;width:2px;height:72px;background:linear-gradient(rgba(120,120,120,.0),#6e6e6e 12%,#6e6e6e 88%,rgba(120,120,120,0));"></div>
<svg style="position:absolute;left:392px;top:318px" width="130" height="56" viewBox="392 318 130 56">
<defs><linearGradient id="ar" x1="0" y1="0" x2="0" y2="1"><stop offset="0" stop-color="#9a9a9a"/><stop offset="1" stop-color="#7a7a7a"/></linearGradient><filter id="arb"><feGaussianBlur stdDeviation="0.6"/></filter></defs>
<g filter="url(#arb)">
<path d="M398 345 L418 322.5 L418 336 L430.5 336 L430.5 354 L418 354 L418 367.5 Z" fill="url(#ar)"/>
<path d="M516.5 345 L496.5 322.5 L496.5 336 L482.5 336 L482.5 354 L496.5 354 L496.5 367.5 Z" fill="url(#ar)"/>
<rect x="402" y="360.5" width="30" height="1.2" fill="#555" opacity=".5"/><rect x="484" y="360.5" width="34" height="1.2" fill="#555" opacity=".5"/>
</g></svg>
<svg style="position:absolute;left:569.5px;top:327.5px;overflow:visible" width="51" height="38" viewBox="0 0 51 38" preserveAspectRatio="none"><defs><linearGradient id="gi3" x1="0" y1="1" x2="1" y2="0"><stop offset="0" stop-color="#7f8fcb"/><stop offset=".55" stop-color="#a9b6e6"/><stop offset="1" stop-color="#e4eeff"/></linearGradient><filter id="gib3"><feGaussianBlur stdDeviation="0.55"/></filter></defs>
<g filter="url(#gib3)">
<path d="M19.4 13 V19 M26.5 7.4 H32.5 M39.5 14.5 V21 M26.5 27 H32" stroke="#66728f" stroke-width="1.5" fill="none"/>
<rect x="12.3" y="0.3" width="14.6" height="13.2" fill="url(#gi3)"/>
<rect x="32.3" y="1.1" width="16.2" height="13.6" fill="url(#gi3)"/>
<rect x="0.5" y="18.3" width="26" height="19" fill="url(#gi3)"/>
<rect x="31.9" y="20.5" width="16.6" height="13.4" fill="url(#gi3)"/>
</g></svg>
<span class="t" style="left:647.0px;top:328.4px;font-size:37px;line-height:37px;color:#969696;transform:scaleX(1.1256);">07-umg-ui</span>
<svg style="position:absolute;left:846px;top:334px" width="28" height="32" viewBox="846 334 28 32"><path d="M852 337.5 L866.5 350 L852 362.5" fill="none" stroke="#000" stroke-width="3.2" transform="translate(1,1.5)"/><path d="M852 337.5 L866.5 350 L852 362.5" fill="none" stroke="#c9c9c9" stroke-width="3.2"/></svg>
<span class="t" style="left:889.5px;top:327.7px;font-size:37px;line-height:37px;color:#969696;transform:scaleX(0.9893);">Event Graph</span>
<span class="t" style="left:1251.0px;top:319.5px;font-size:43.6px;line-height:43.6px;color:#2f2f2f;font-weight:bold;transform:scaleX(0.7998);">Zoom 1:1</span>
</div></div>
<div style="position:absolute;left:1442px;top:122.5px;width:299.5px;height:46px;background:#626262;border-radius:4px 4px 0 0;box-shadow:inset 0 1px 0 #6c6c6c;"></div>
<div style="position:absolute;left:1433.8px;top:166px;width:467.4px;height:1392px;background:#616161;border-radius:0 0 3px 3px;"></div>
<svg style="position:absolute;left:1452px;top:128px;overflow:visible" width="36" height="34" viewBox="1452 128 36 34"><defs><radialGradient id="dt1" cx="45%" cy="35%" r="70%"><stop offset="0" stop-color="#ffffff"/><stop offset=".6" stop-color="#d8d8dc"/><stop offset="1" stop-color="#9a9aa4"/></radialGradient></defs><path d="M1474.5 150.5 L1484 158" stroke="#4a6ed0" stroke-width="3.6" stroke-linecap="round"/>
<circle cx="1467.5" cy="143" r="11.6" fill="url(#dt1)" stroke="#4468cc" stroke-width="2.6"/>
<path d="M1465.8 136.5 h3.4 v3 h-3.4 Z M1464.4 141 h4.8 v7 h1.6 v1.8 h-6.6 v-1.8 h1.8 v-5.2 h-1.6 Z" fill="#2a2a2e"/></svg>
<span class="t" style="left:1498.5px;top:130.3px;font-size:24.5px;line-height:24.5px;color:#f0f0f0;text-shadow:2px 2px 1px rgba(0,0,0,.95);transform:scaleX(0.9948);">Details</span>
<svg style="position:absolute;left:1709.5px;top:139px" width="11" height="11" viewBox="0 0 10 10"><path d="M1.2 1.2 L8.8 8.8 M8.8 1.2 L1.2 8.8" stroke="#4a4a4a" stroke-width="2.1" fill="none"/></svg>
</body></html>
